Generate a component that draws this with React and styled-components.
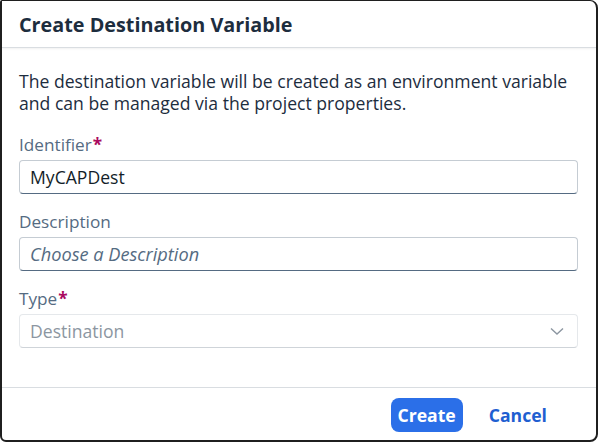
import React from 'react';
import styled, { createGlobalStyle } from 'styled-components';

const GlobalStyle = createGlobalStyle`
  html, body {
    margin: 0;
    padding: 0;
    background: #ffffff;
  }
  body {
    font-family: "Open Sans", "Liberation Sans", Arial, sans-serif;
  }
`;

const Dialog = styled.div`
  box-sizing: border-box;
  width: 598px;
  height: 442px;
  border: 2px solid #1f1f1f;
  border-top-width: 1px;
  border-radius: 2px 8px 8px 6px;
  background: #fff;
  display: flex;
  flex-direction: column;
  overflow: hidden;
`;

const Header = styled.header`
  height: 46px;
  flex: none;
  display: flex;
  align-items: center;
  padding: 0 17px;
  border-bottom: 1px solid #d9dde1;
  box-shadow: 0 1px 2px rgba(0, 0, 0, 0.06);
`;

const Title = styled.h1`
  margin: 0;
  font-size: 19.8px;
  font-weight: 700;
  color: #1d2d3e;
`;

const Body = styled.div`
  flex: 1;
  padding: 22px 18px 0 17px;
  display: flex;
  flex-direction: column;
`;

const Intro = styled.p`
  margin: 0 0 20px;
  font-size: 17.6px;
  line-height: 22px;
  color: #1d2d3e;
`;

const Field = styled.div`
  display: flex;
  flex-direction: column;
  margin-bottom: 17px;
`;

const Label = styled.label`
  font-size: 17.2px;
  line-height: 22px;
  color: #556b82;
  margin-bottom: 4px;
`;

const Required = styled.span`
  color: #aa0a5f;
  font-weight: 700;
  margin-left: 1px;
`;

const Input = styled.div`
  box-sizing: border-box;
  height: 34px;
  display: flex;
  align-items: center;
  justify-content: space-between;
  padding: 0 10px;
  border: 1px solid ${p => (p.disabled ? '#e5e8eb' : '#c5ccd3')};
  border-bottom-color: ${p => (p.disabled ? '#cfd4d9' : '#556b82')};
  border-radius: 4px;
  font-size: ${p => (p.placeholder ? '18.2px' : '17.6px')};
  color: ${p => (p.disabled ? '#8c96a1' : p.placeholder ? '#556b82' : '#131e29')};
  font-style: ${p => (p.placeholder ? 'italic' : 'normal')};
  background: #fff;
`;

const Chevron = styled.svg`
  width: 16px;
  height: 16px;
  flex: none;
  margin-right: 2px;
`;

const Footer = styled.footer`
  box-sizing: border-box;
  height: 53px;
  flex: none;
  border-top: 1px solid #d9dde1;
  display: flex;
  align-items: center;
  justify-content: flex-end;
  gap: 14px;
  padding: 2px 37px 0 0;
`;

const Button = styled.button`
  font-family: inherit;
  font-size: 17.6px;
  font-weight: 700;
  height: 34px;
  padding: 0 ${p => (p.primary ? '7px' : '12px')};
  border-radius: 8px;
  border: none;
  cursor: pointer;
  background: ${p => (p.primary ? '#2b6fe8' : 'transparent')};
  color: ${p => (p.primary ? '#ffffff' : '#1f5fd1')};
`;

export default function App() {
  return (
    <>
      <GlobalStyle />
      <Dialog>
        <Header>
          <Title>Create Destination Variable</Title>
        </Header>
        <Body>
          <Intro>
            The destination variable will be created as an environment variable
            <br />
            and can be managed via the project properties.
          </Intro>
          <Field>
            <Label>
              Identifier<Required>*</Required>
            </Label>
            <Input>MyCAPDest</Input>
          </Field>
          <Field>
            <Label>Description</Label>
            <Input placeholder>Choose a Description</Input>
          </Field>
          <Field>
            <Label>
              Type<Required>*</Required>
            </Label>
            <Input disabled>
              Destination
              <Chevron viewBox="0 0 16 16">
                <path d="M2 5.5 L8 11 L14 5.5" fill="none" stroke="#8c96a1" strokeWidth="1.4" />
              </Chevron>
            </Input>
          </Field>
        </Body>
        <Footer>
          <Button primary>Create</Button>
          <Button>Cancel</Button>
        </Footer>
      </Dialog>
    </>
  );
}
